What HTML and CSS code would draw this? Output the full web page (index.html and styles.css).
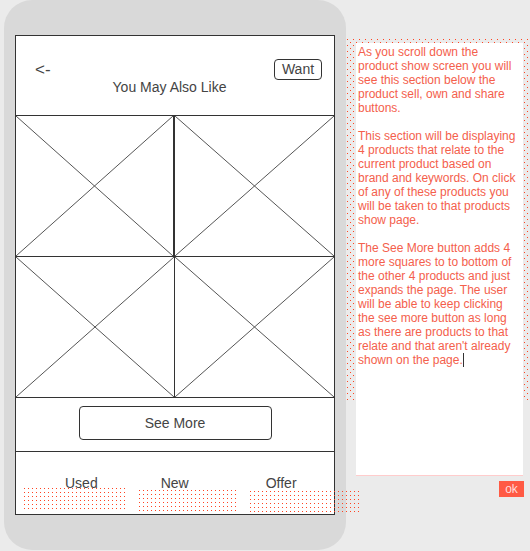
FILE: index.html
```html
<!DOCTYPE html>
<html>
<head>
    <meta charset="UTF-8">
    <title>You May Also Like</title>
    <link rel="stylesheet" href="styles.css">
</head>
<body>
    <div class="phone">
        <div class="screen">
            <div class="header">
                <div class="topRow">
                    <span class="back">&lt;-</span>
                    <span class="want">Want</span>
                </div>
                <div class="title">You May Also Like</div>
            </div>
            <div class="grid">
                <div class="cell first">
                    <svg viewBox="0 0 100 100" preserveAspectRatio="none"><line x1="0" y1="0" x2="100" y2="100"/><line x1="100" y1="0" x2="0" y2="100"/></svg>
                </div>
                <div class="cell">
                    <svg viewBox="0 0 100 100" preserveAspectRatio="none"><line x1="0" y1="0" x2="100" y2="100"/><line x1="100" y1="0" x2="0" y2="100"/></svg>
                </div>
                <div class="cell">
                    <svg viewBox="0 0 100 100" preserveAspectRatio="none"><line x1="0" y1="0" x2="100" y2="100"/><line x1="100" y1="0" x2="0" y2="100"/></svg>
                </div>
                <div class="cell">
                    <svg viewBox="0 0 100 100" preserveAspectRatio="none"><line x1="0" y1="0" x2="100" y2="100"/><line x1="100" y1="0" x2="0" y2="100"/></svg>
                </div>
            </div>
            <div class="more">
                <span class="moreBtn">See More</span>
            </div>
            <div class="tabs">
                <span class="tab used">Used</span>
                <span class="tab new">New</span>
                <span class="tab offer">Offer</span>
                <!-- hotspots -->
                <span class="hot hotUsed"></span>
                <span class="hot hotNew"></span>
                <span class="hot hotOffer"></span>
            </div>
        </div>
    </div>
    <div class="note">
        <div class="panel">
            <p>As you scroll down the<br>product show screen you will<br>see this section below the<br>product sell, own and share<br>buttons.</p>
            <p>This section will be displaying<br>4 products that relate to the<br>current product based on<br>brand and keywords. On click<br>of any of these products you<br>will be taken to that products<br>show page.</p>
            <p>The See More button adds 4<br>more squares to to bottom of<br>the other 4 products and just<br>expands the page. The user<br>will be able to keep clicking<br>the see more button as long<br>as there are products to that<br>relate and that aren't already<br>shown on the page.<span class="caret"></span></p>
        </div>
        <span class="ok">ok</span>
    </div>
</body>
</html>
```

FILE: styles.css
```css
*{
    padding: 0;
    margin: 0;
    box-sizing: border-box;
}
body{
    background: #ebebeb;
    font-family: "Liberation Sans", Arial, sans-serif;
    display: flex;
    align-items: flex-start;
    height: 551px;
    overflow: hidden;
}
.phone{
    width: 342px;
    height: 550px;
    margin-left: 4px;
    padding: 35px 0 0 11px;
    background: #d9d9d9;
    border-radius: 28px;
}
.screen{
    width: 320px;
    height: 480px;
    border: 1px solid #333;
    background: #fff;
    display: flex;
    flex-direction: column;
    color: #444;
}
.header{
    height: 80px;
    border-bottom: 1px solid #333;
    padding-top: 23px;
}
.topRow{
    display: flex;
    justify-content: space-between;
    align-items: center;
    height: 21px;
    padding: 0 12px 0 19px;
}
.back{
    font-size: 17px;
    line-height: 21px;
}
.want{
    width: 48px;
    height: 21px;
    border: 1px solid #333;
    border-radius: 4px;
    font-size: 14px;
    line-height: 19px;
    text-align: center;
}
.title{
    font-size: 14px;
    line-height: 15px;
    text-align: center;
    padding-right: 11px;
}
.grid{
    display: grid;
    grid-template-columns: 159px 1fr;
    grid-template-rows: 141px 141px;
}
.cell{
    border-bottom: 1px solid #333;
    position: relative;
}
.cell:nth-child(odd){
    border-right: 1px solid #333;
}
.cell.first{
    border-right-width: 2px;
}
.cell svg{
    display: block;
    width: 100%;
    height: 100%;
}
.cell line{
    stroke: #555;
    stroke-width: 1;
    vector-effect: non-scaling-stroke;
}
.more{
    height: 54px;
    border-bottom: 1px solid #333;
    padding-top: 8px;
    display: flex;
    justify-content: center;
    align-items: flex-start;
}
.moreBtn{
    width: 193px;
    height: 34px;
    border: 1px solid #333;
    border-radius: 4px;
    font-size: 14px;
    line-height: 32px;
    text-align: center;
}
.tabs{
    flex: 1;
    display: flex;
    align-items: flex-start;
    padding: 23px 0 0 49px;
    position: relative;
}
.tab{
    font-size: 14px;
    line-height: 16px;
}
.new{
    margin-left: 63px;
}
.offer{
    margin-left: 77px;
}
/* 1px dots: the top-left quarter of each tile */
.hot{
    position: absolute;
    background-image: conic-gradient(at 1px 1px, transparent 75%, #f42 0);
    background-size: 4px 4px;
}
.hotUsed{
    left: 8px;
    top: 36px;
    width: 103px;
    height: 22px;
}
.hotNew{
    left: 123px;
    top: 38px;
    width: 100px;
    height: 22px;
}
.hotOffer{
    left: 234px;
    top: 39px;
    width: 111px;
    height: 21px;
}
.note{
    width: 181px;
    margin: 39px 0 0 1px;
    padding: 4px 5px 0 9px;
    position: relative;
    isolation: isolate;
    display: flex;
    flex-direction: column;
}
.note::before{
    content: '';
    position: absolute;
    left: 0;
    top: 0;
    width: 181px;
    height: 361px;
    z-index: -1;
    background-image: conic-gradient(at 1px 1px, transparent 75%, #f42 0), conic-gradient(at 1px 1px, transparent 75%, #f42 0);
    background-size: 6px 6px;
    background-position: 0 0, 3px 3px;
}
.panel{
    height: 433px;
    background: #fff;
    border-bottom: 1px solid #fcc;
    padding: 2px 0 0 2px;
    color: #f4604c;
    font-size: 12px;
    line-height: 14px;
    white-space: nowrap;
}
.panel p{
    margin-bottom: 14px;
}
.caret{
    display: inline-block;
    width: 1px;
    height: 14px;
    background: #333;
    vertical-align: top;
}
.ok{
    align-self: flex-end;
    margin: 5px -1px 0 0;
    width: 25px;
    height: 16px;
    background: #ff5a44;
    color: #fdd;
    font-size: 12px;
    line-height: 16px;
    text-align: center;
}
```
